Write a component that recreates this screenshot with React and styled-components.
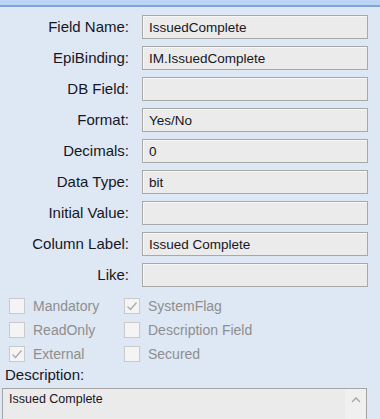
import React from 'react';
import styled, { createGlobalStyle } from 'styled-components';

const GlobalStyle = createGlobalStyle`
  html, body {
    margin: 0;
    padding: 0;
    background: #dee8f4;
    overflow: hidden;
  }
  body {
    font-family: "Liberation Sans", Arial, sans-serif;
  }
`;

const Panel = styled.div`
  width: 380px;
  height: 419px;
  overflow: hidden;
  background: #dee8f4;
  display: flex;
  flex-direction: column;
`;

const TopBand = styled.div`
  height: 5px;
  background: #bcd5f7;
  border-bottom: 2px solid #7ea3d9;
  flex-shrink: 0;
`;

const FieldGrid = styled.div`
  display: grid;
  grid-template-columns: 129px 226px;
  column-gap: 13px;
  row-gap: 7px;
  padding-top: 8px;
  align-items: center;
`;

const Label = styled.label`
  text-align: right;
  font-size: 15px;
  color: #16161e;
  line-height: 24px;
  white-space: nowrap;
`;

const Input = styled.div`
  box-sizing: border-box;
  height: 24px;
  background: #ebebeb;
  border: 1px solid #a8a8a8;
  box-shadow: inset 1px 1px 0 #f7f7f7;
  font-size: 13.5px;
  color: #16161e;
  padding: 0 6px;
  display: flex;
  align-items: center;
  white-space: nowrap;
  overflow: hidden;
`;

const CheckGrid = styled.div`
  display: grid;
  grid-template-columns: 115px auto;
  grid-auto-rows: 24px;
  padding: 7px 0 0 9px;
`;

const CheckRow = styled.div`
  display: flex;
  align-items: center;
  gap: 8px;
  font-size: 14px;
  color: #8e8e8e;
  white-space: nowrap;
`;

const Box = styled.span`
  box-sizing: border-box;
  width: 16px;
  height: 16px;
  background: #f4f4f4;
  border: 1px solid #cacaca;
  display: flex;
  align-items: center;
  justify-content: center;
`;

const DescLabel = styled.div`
  font-size: 15px;
  color: #16161e;
  padding: 0 0 0 5px;
  line-height: 18px;
`;

const TextArea = styled.div`
  margin: 4px 0 0 2px;
  width: 365px;
  flex: 1;
  box-sizing: border-box;
  background: #ebebeb;
  border: 1px solid #a5a5a5;
  border-bottom: none;
  display: flex;
`;

const AreaText = styled.div`
  flex: 1;
  font-size: 12.5px;
  color: #16161e;
  padding: 3px 6px;
`;

const ScrollBar = styled.div`
  width: 21px;
  background: #f0f0f0;
  display: flex;
  justify-content: center;
  padding-top: 8px;
`;

const Check = () => (
  <svg width="12" height="12" viewBox="0 0 12 12">
    <path d="M1.5 6.5 L4.5 9.5 L10.5 2.5" fill="none" stroke="#a8a8a8" strokeWidth="1.2" />
  </svg>
);

const CheckItem = ({ checked, children }) => (
  <CheckRow>
    <Box>{checked && <Check />}</Box>
    {children}
  </CheckRow>
);

const fields = [
  ['Field Name:', 'IssuedComplete'],
  ['EpiBinding:', 'IM.IssuedComplete'],
  ['DB Field:', ''],
  ['Format:', 'Yes/No'],
  ['Decimals:', '0'],
  ['Data Type:', 'bit'],
  ['Initial Value:', ''],
  ['Column Label:', 'Issued Complete'],
  ['Like:', ''],
];

const App = () => (
  <>
    <GlobalStyle />
    <Panel>
      <TopBand />
      <FieldGrid>
        {fields.map(([label, value]) => (
          <React.Fragment key={label}>
            <Label>{label}</Label>
            <Input>{value}</Input>
          </React.Fragment>
        ))}
      </FieldGrid>
      <CheckGrid>
        <CheckItem>Mandatory</CheckItem>
        <CheckItem checked>SystemFlag</CheckItem>
        <CheckItem>ReadOnly</CheckItem>
        <CheckItem>Description Field</CheckItem>
        <CheckItem checked>External</CheckItem>
        <CheckItem>Secured</CheckItem>
      </CheckGrid>
      <DescLabel>Description:</DescLabel>
      <TextArea>
        <AreaText>Issued Complete</AreaText>
        <ScrollBar>
          <svg width="10" height="6" viewBox="0 0 10 6">
            <path d="M1 5 L5 1 L9 5" fill="none" stroke="#a6a6a6" strokeWidth="1.3" />
          </svg>
        </ScrollBar>
      </TextArea>
    </Panel>
  </>
);

export default App;
